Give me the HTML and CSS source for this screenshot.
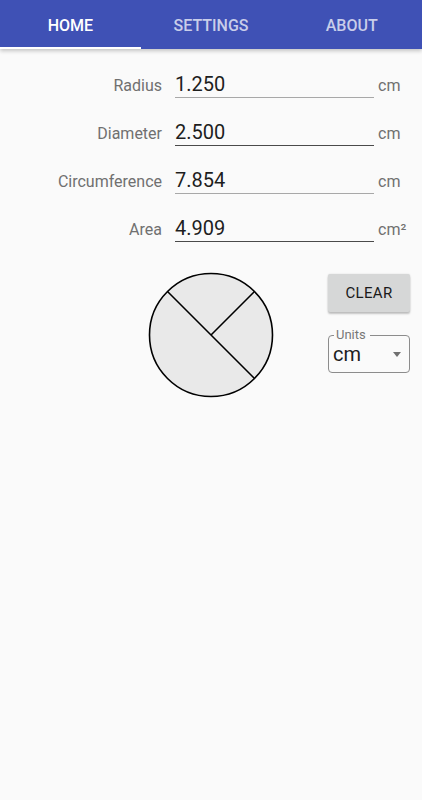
FILE: index.html
```html
<!DOCTYPE html>
<html lang="en">
<head>
<meta charset="utf-8">
<title>Circle</title>
<link rel="stylesheet" href="styles.css">
</head>
<body>
<header class="tabs">
  <div class="tab active">HOME</div>
  <div class="tab">SETTINGS</div>
  <div class="tab">ABOUT</div>
</header>
<main class="content">
  <div class="row">
    <span class="label">Radius</span>
    <span class="field light">1.250</span>
    <span class="unit">cm</span>
  </div>
  <div class="row">
    <span class="label">Diameter</span>
    <span class="field dark">2.500</span>
    <span class="unit">cm</span>
  </div>
  <div class="row">
    <span class="label">Circumference</span>
    <span class="field light">7.854</span>
    <span class="unit">cm</span>
  </div>
  <div class="row">
    <span class="label">Area</span>
    <span class="field dark">4.909</span>
    <span class="unit">cm²</span>
  </div>
  <section class="visual">
    <div class="spacer"></div>
    <svg class="circle" width="126" height="126" viewBox="0 0 126 126">
      <circle cx="63" cy="63" r="61.5" fill="#e9e9e9" stroke="#000" stroke-width="1.6"/>
      <line x1="19.5" y1="19.5" x2="106.5" y2="106.5" stroke="#000" stroke-width="1.6"/>
      <line x1="63" y1="63" x2="106.5" y2="19.5" stroke="#000" stroke-width="1.6"/>
    </svg>
    <div class="controls">
      <button class="clear">CLEAR</button>
      <fieldset class="units">
        <legend>Units</legend>
        <div class="select"><span>cm</span><i class="arrow"></i></div>
      </fieldset>
    </div>
  </section>
</main>
</body>
</html>
```
FILE: styles.css
```css
* { box-sizing: border-box; }
html, body {
  margin: 0;
  padding: 0;
  background: #fafafa;
  font-family: Roboto, "Liberation Sans", sans-serif;
  width: 422px;
  height: 800px;
  overflow: hidden;
}
.tabs {
  display: flex;
  height: 49px;
  background: #3f51b5;
  box-shadow: 0 2px 4px rgba(0,0,0,0.22);
  position: relative;
  z-index: 1;
}
.tab {
  flex: 1 1 0;
  height: 49px;
  padding-top: 16px;
  line-height: 20px;
  text-align: center;
  font-size: 16px;
  font-weight: 500;
  color: rgba(255,255,255,0.72);
}
.tab.active {
  color: #fff;
  border-bottom: 2px solid #fff;
}
.content {
  padding-top: 1px;
}
.row {
  display: flex;
  align-items: baseline;
  height: 48px;
  padding-top: 22px;
}
.label {
  width: 162px;
  text-align: right;
  font-size: 16px;
  line-height: 24px;
  color: #707070;
}
.field {
  width: 199px;
  margin-left: 13px;
  font-size: 20px;
  line-height: 24px;
  padding-bottom: 1px;
  color: #1e1e1e;
}
.field.light { border-bottom: 1px solid #a8a8a8; }
.field.dark { border-bottom: 1px solid #4a4a4a; }
.unit {
  margin-left: 4px;
  font-size: 16px;
  line-height: 24px;
  color: #707070;
}
.visual {
  display: grid;
  grid-template-columns: 1fr 126px 1fr;
  margin-top: 30px;
}
.circle { display: block; }
.controls {
  display: flex;
  flex-direction: column;
  align-items: flex-end;
  padding-right: 12px;
}
.clear {
  margin-top: 2px;
  width: 82px;
  height: 38px;
  border: none;
  border-radius: 2px;
  background: #d6d7d7;
  box-shadow: 0 2px 2px rgba(0,0,0,0.22), 0 0 2px rgba(0,0,0,0.12);
  font-family: Roboto, "Liberation Sans", sans-serif;
  font-size: 15px;
  font-weight: 400;
  letter-spacing: 0.3px;
  color: #1a1a1a;
  padding: 0;
}
.units {
  margin: 16px 0 0 0;
  padding: 0 8px 6px 4px;
  width: 82px;
  min-width: 0;
  border: 1px solid #8c8c8c;
  border-radius: 4px;
}
.units legend {
  margin-left: 1px;
  padding: 0 4px 0 2px;
  font-size: 13px;
  line-height: 14px;
  color: #777;
}
.select {
  display: flex;
  align-items: center;
  justify-content: space-between;
  font-size: 20px;
  line-height: 24px;
  color: #1e1e1e;
}
.arrow {
  display: block;
  width: 0;
  height: 0;
  border-left: 4.5px solid transparent;
  border-right: 4.5px solid transparent;
  border-top: 5px solid #707070;
}
```
